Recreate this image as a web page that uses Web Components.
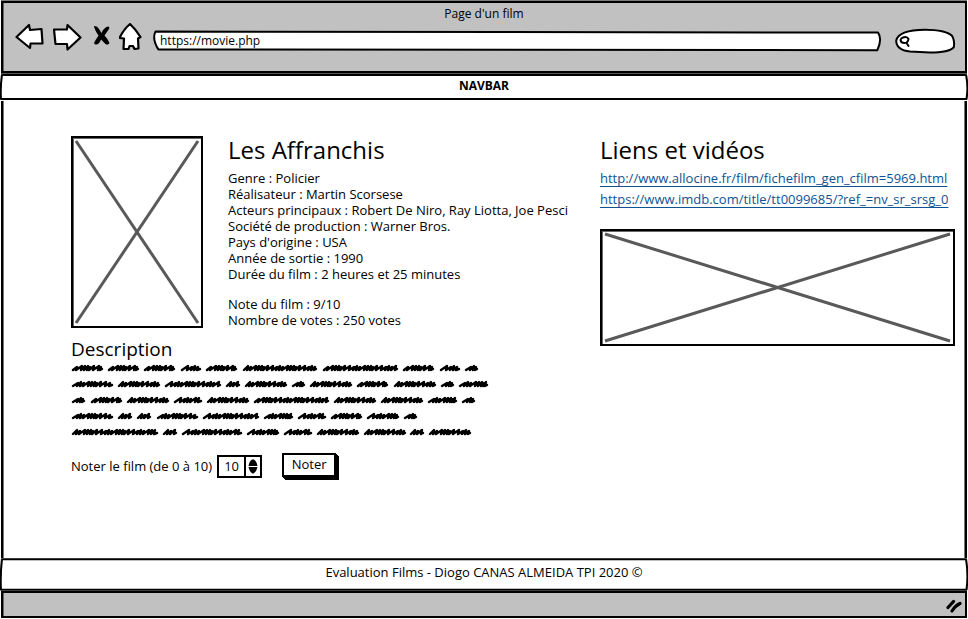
<!DOCTYPE html>
<html lang="fr">
<head>
<meta charset="utf-8">
<title>Page d'un film</title>
<style>
body{margin:0;background:#fff;color:#000;font:13px/16px "Open Sans","Noto Sans",sans-serif}
</style>
</head>
<body>
<wire-window>
  <wire-toolbar slot="top" heading="Page d'un film" url="https://movie.php"></wire-toolbar>
  <wire-strip slot="top" kind="nav">NAVBAR</wire-strip>
  <movie-page></movie-page>
  <wire-strip slot="bottom" kind="foot">Evaluation Films - Diogo CANAS ALMEIDA TPI 2020 ©</wire-strip>
  <wire-status slot="bottom"></wire-status>
</wire-window>

<script>
const define = (name, html, setup) => {
  const template = document.createElement('template');
  template.innerHTML = html;
  customElements.define(name, class extends HTMLElement {
    constructor() {
      super();
      this.attachShadow({ mode: 'open' }).append(template.content.cloneNode(true));
    }
    connectedCallback() { if (setup) setup(this, this.shadowRoot); }
  });
};

/* Outer browser window: bars at both ends, page area in between */
define('wire-window', `
<style>
:host{display:flex;flex-direction:column;box-sizing:border-box;min-height:100vh;padding:1px 0}
main{flex:1;margin:1px 1px 0;border:solid #000;border-width:0 2px;box-shadow:inset 1px 0 #777,inset -1px 0 #777}
</style>
<slot name="top"></slot>
<main><slot></slot></main>
<slot name="bottom"></slot>`);

/* Hand-drawn outline that stretches over its host's box */
define('sketch-outline', `
<style>
:host{position:absolute;inset:0;z-index:-1;pointer-events:none}
svg{display:block;width:100%;height:100%;overflow:visible}
path{fill:#fff;stroke:#000;stroke-width:2px;stroke-linejoin:round;vector-effect:non-scaling-stroke}
</style>
<svg viewBox="0 0 100 100" preserveAspectRatio="none" aria-hidden="true"><path/></svg>`,
(el, root) => {
  root.querySelector('path').setAttribute('d', el.getAttribute('d'));
});

define('wire-toolbar', `
<style>
:host{display:block;margin:0 1px;padding:2px 0 18px;border:2px solid #000;background:#c1c1c1;box-shadow:0 -1px #7d7d7d,0 1px #555,inset 1px 0 #666}
h1{margin:0;font-size:12px;font-weight:400;line-height:18px;text-align:center}
.row{display:flex;align-items:flex-start;padding:0 10px 0 12px}
nav{display:flex;align-items:center;gap:8px;margin-right:11px}
button{display:block;padding:0;border:0;background:none}
svg{display:block}
.icon path{fill:#fff;stroke:#000;stroke-width:2.2;stroke-linejoin:round;stroke-linecap:round}
label{position:relative;z-index:0;display:flex;align-items:center;box-sizing:border-box}
.address{flex:1;min-width:0;height:20px;padding:0 6px;margin-top:8px}
.search{width:60px;height:24px;margin:6px 0 0 14px;padding-left:4px}
input{flex:1;min-width:0;width:100%;box-sizing:border-box;padding:0;border:0;outline:0;background:none;color:inherit;font:inherit;font-size:12px;line-height:16px}
</style>
<h1></h1>
<div class="row">
  <nav aria-label="Navigateur">
    <button class="icon" aria-label="Retour"><svg width="30" height="28" viewBox="0 0 30 28"><path d="M1.500 14 14 2 15 7 26.500 6 27.500 20.500 15.500 20.500 15 25Z"/></svg></button>
    <button class="icon" aria-label="Suivant"><svg width="30" height="28" viewBox="0 0 30 28"><path d="M1 6.500 14 6.500 14.500 2 27.500 14.500 14.500 26.500 14 21 2.500 21Z"/></svg></button>
    <button aria-label="Arrêter"><svg width="20" height="28" viewBox="0 0 20 28"><path d="M3 3Q6 2.500 8 6L10.500 10Q13 4 17.500 3.500 19 4 18 6L13.500 12.500Q17 16 18.500 20 17 22.500 14.500 21L10 16.500Q8 22 4.500 21.500 2 20.500 4 18L7.500 12.500Q3.500 7 3 3Z"/></svg></button>
    <button class="icon" aria-label="Accueil"><svg width="24" height="28" viewBox="0 0 24 28"><path d="M11 1Q16.500 6 21.500 14L19 15.500 19.500 25.500 15.500 26 14 23 10.500 23 9.500 26 4.500 26 5 15.500 .500 15Q4.500 6.500 11 1Z"/></svg></button>
  </nav>
  <label class="address"><input type="text" aria-label="Adresse"><sketch-outline d="M.200 3 99.600 8Q100.200 40 99.500 96L.600 92Q-.300 40 .200 3Z"></sketch-outline></label>
  <label class="search">
    <svg width="12" height="14" viewBox="0 0 12 14"><path d="M4 3.500Q8 2 9.500 5 9 9 5.500 9 2 9 1.500 6 2 4 4 3.500ZM7.500 9 9.500 12" fill="none" stroke="#000" stroke-width="2" stroke-linecap="round"/></svg>
    <input type="search" aria-label="Rechercher">
    <sketch-outline d="M2 48Q6 4 50 3 84 3 95 28 100 50 98 76 90 98 58 98L25 94Q2 88 2 48Z"></sketch-outline>
  </label>
</div>`,
(el, root) => {
  root.querySelector('h1').textContent = el.getAttribute('heading');
  root.querySelector('.address input').value = el.getAttribute('url');
});

/* Full-width bar used for the navbar and the footer */
define('wire-strip', `
<style>
:host{position:relative;z-index:0;display:block;text-align:center}
:host([kind=nav]){margin-top:1px;padding:4px 0 6px;font-size:12px;font-weight:700}
:host([kind=foot]){padding:6px 0 11px}
</style>
<slot></slot>
<sketch-outline d="M.200 4 99.800 4Q100.050 50 99.850 96L.100 96Q.020 50 .200 4Z"></sketch-outline>`);

define('wire-status', `
<style>
:host{display:flex;justify-content:flex-end;margin:0 1px;padding:6px 3px 3px;border:2px solid #000;background:#c1c1c1;box-shadow:inset 1px 0 #666}
svg{display:block}
</style>
<svg width="16" height="14" viewBox="0 0 16 14" aria-hidden="true"><path d="M2 8.500 7.500 2.500M6 12Q9.500 6.500 14 4.500" fill="none" stroke="#000" stroke-width="3.200" stroke-linecap="round"/></svg>`);

/* Crossed box standing for a picture or a video */
define('wire-picture', `
<style>
:host{position:relative;display:block;box-sizing:border-box;border:2px solid #000;box-shadow:inset 1px 1px #666}
svg{position:absolute;inset:3px;width:calc(100% - 6px);height:calc(100% - 6px);overflow:visible}
line{stroke:#595959;stroke-width:3px;vector-effect:non-scaling-stroke}
</style>
<svg viewBox="0 0 100 100" preserveAspectRatio="none" role="img" aria-label="Image"><line x2="100" y2="100"/><line x1="100" y2="100"/></svg>`);

/* Placeholder paragraph: each pair of numbers is the start and end of a scrawled word */
define('wire-scribble', `
<style>
:host{display:block}
svg{display:block;max-width:100%}
path{fill:none;stroke:#000;stroke-width:2.400;stroke-linejoin:round;stroke-linecap:round}
</style>
<svg width="420" height="80" viewBox="0 0 420 80" role="img" aria-label="Texte de la description"></svg>`,
(el, root) => {
  const rows = [
    '1-32 37-68 73-104 110-130 135-166 172-246 252-327 332-363 369-389 394-407',
    '1-42 47-89 94-150 155-169 174-216 221-234 239-281 286-317 323-365 370-383 388-417',
    '1-14 20-51 56-98 103-131 136-178 183-258 263-305 310-352 357-386 391-404',
    '1-42 47-61 66-80 86-127 132-188 193-222 227-255 260-291 296-328 333-346',
    '1-87 92-106 111-171 176-208 213-241 246-288 293-335 339-353 358-400'
  ];
  /* stroke advance and height, cycled through each word */
  const hand = [[5, 2], [4, 1], [3, 2], [3, 1], [5, 2], [3, 2], [3, 2], [2, 1], [4, 2]];
  let d = '';
  rows.forEach((row, i) => {
    const y = 6 + i * 16;
    row.split(' ').forEach(word => {
      const [a, b] = word.split('-').map(Number);
      let x = a + 1, n = (b - a) % 4;
      d += `M${x} ${y + 2}`;
      while (x < b - 4) {
        const [step, rise] = hand[n++ % hand.length];
        x = Math.min(x + step, b - 3);
        d += `L${x + 1} ${y - rise}L${x} ${y + 2}`;
      }
      d += `L${b - 1} ${y + 1}`;
    });
  });
  root.querySelector('svg').innerHTML = `<path d="${d}"/>`;
});

define('rating-form', `
<style>
:host{display:block}
form{display:flex;align-items:center}
.spin{display:flex;box-sizing:border-box;width:45px;height:23px;margin-left:5px;border:2px solid #000}
input{flex:1;min-width:0;box-sizing:border-box;padding:0;border:0;outline:0;background:none;color:inherit;font:inherit;text-align:center;appearance:textfield;-moz-appearance:textfield}
input::-webkit-inner-spin-button{display:none}
.steps{display:flex;flex-direction:column;justify-content:center;gap:1px;padding:0 2px;border-left:2px solid #000}
.steps button{display:block;padding:0;border:0;background:none}
svg{display:block}
.send{height:24px;width:54px;margin:0 0 2px 20px;padding:0 0 2px;border:2px solid #000;background:#fff;color:inherit;font:inherit;box-shadow:1px 1px #000,2px 2px #000,3px 3px #000}
</style>
<form>
  <label for="note">Noter le film (de 0 à 10)</label>
  <div class="spin">
    <input id="note" type="number" min="0" max="10" value="10">
    <div class="steps">
      <button type="button" data-step="1" aria-label="Augmenter"><svg width="10" height="7" viewBox="0 0 10 7"><path d="M.500 7Q1.500 1 5 .300 8.500 1 9.500 7Z"/></svg></button>
      <button type="button" data-step="-1" aria-label="Diminuer"><svg width="10" height="7" viewBox="0 0 10 7"><path d="M.500 0H9.500Q8.500 5 5 6.800 1.500 5 .500 0Z"/></svg></button>
    </div>
  </div>
  <button class="send" type="submit">Noter</button>
</form>`,
(el, root) => {
  const input = root.querySelector('input');
  root.querySelectorAll('[data-step]').forEach(b => b.addEventListener('click', () => b.dataset.step > 0 ? input.stepUp() : input.stepDown()));
  root.querySelector('form').addEventListener('submit', e => e.preventDefault());
});

define('movie-page', `
<style>
:host{display:grid;grid-template-columns:minmax(0,529fr) minmax(0,355fr);padding:35px 10px 24px 68px}
h2,h3,p,ul{margin:0;padding:0;font-weight:400}
h2{font-size:24px;line-height:28px}
h3{font-size:19px;line-height:24px;margin-top:9px}
.film{display:flex;gap:25px;align-items:flex-start}
.poster{flex:none;width:132px;height:192px}
.facts{margin-top:6px;white-space:nowrap}
.facts + .facts{margin-top:14px}
wire-scribble{margin-top:1px}
rating-form{margin-top:11px}
ul{list-style:none;margin-top:4px;line-height:21px}
a{color:#0d5394;text-decoration:underline;text-underline-offset:3px;white-space:nowrap}
.video{margin-top:19px;aspect-ratio:355/117}
</style>
<section>
  <div class="film">
    <wire-picture class="poster"></wire-picture>
    <div>
      <h2>Les Affranchis</h2>
      <p class="facts">Genre : Policier<br>Réalisateur : Martin Scorsese<br>Acteurs principaux : Robert De Niro, Ray Liotta, Joe Pesci<br>Société de production : Warner Bros.<br>Pays d'origine : USA<br>Année de sortie : 1990<br>Durée du film : 2 heures et 25 minutes</p>
      <p class="facts">Note du film : 9/10<br>Nombre de votes : 250 votes</p>
    </div>
  </div>
  <h3>Description</h3>
  <wire-scribble></wire-scribble>
  <rating-form></rating-form>
</section>
<section>
  <h2>Liens et vidéos</h2>
  <ul>
    <li><a href="http://www.allocine.fr/film/fichefilm_gen_cfilm=5969.html">http://www.allocine.fr/film/fichefilm_gen_cfilm=5969.html</a></li>
    <li><a href="https://www.imdb.com/title/tt0099685/?ref_=nv_sr_srsg_0">https://www.imdb.com/title/tt0099685/?ref_=nv_sr_srsg_0</a></li>
  </ul>
  <wire-picture class="video"></wire-picture>
</section>`);
</script>
</body>
</html>
